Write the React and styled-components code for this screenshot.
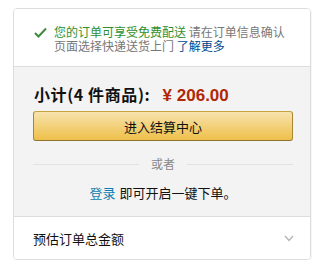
import React from 'react'
import styled, { createGlobalStyle } from 'styled-components'

const GlobalStyle = createGlobalStyle`
    body {
        margin: 0;
        background: #fff;
        font-family: "Noto Sans CJK SC", "Liberation Sans", sans-serif;
    }
`

const Page = styled.div`
    padding: 8px 9px 0 13px;
`

const Panel = styled.div`
    width: 298px;
    box-sizing: border-box;
    border: 1px solid #ddd;
    border-radius: 4px;
    overflow: hidden;
    box-shadow: 1px 1px 1px rgba(0, 0, 0, 0.04);
`

const Notice = styled.div`
    display: flex;
    align-items: flex-start;
    gap: 7px;
    padding: 16px 20px 13px 20px;
    background: #fff;
    border-bottom: 1px solid #ddd;
`

const NoticeText = styled.div`
    width: 236px;
    font-size: 12px;
    line-height: 14px;
    color: #777;
`

const Green = styled.span`
    color: #2f8f2f;
`

const LearnMore = styled.a`
    color: #004b91;
    text-decoration: none;
`

const Summary = styled.div`
    background: #f3f3f3;
    padding: 17px 17px 15px 19px;
    border-bottom: 1px solid #ddd;
`

const Subtotal = styled.div`
    font-size: 16px;
    line-height: 20px;
    font-weight: bold;
    color: #111;
    padding-left: 1px;
    letter-spacing: 0.6px;
`

const Price = styled.span`
    color: #b12704;
    margin-left: 8px;
    font-family: "Liberation Sans", sans-serif;
    font-size: 17px;
    letter-spacing: 0;
`

const CheckoutButton = styled.button`
    display: block;
    width: 100%;
    height: 30px;
    margin-top: 5px;
    border: 1px solid #a88734;
    border-color: #c4a23f #a88734 #8d7230;
    border-radius: 3px;
    background: linear-gradient(to bottom, #f8e3ad, #eebf4a);
    font-family: inherit;
    font-size: 13px;
    color: #111;
    cursor: pointer;
`

const Divider = styled.div`
    display: flex;
    align-items: center;
    gap: 12px;
    margin-top: 15px;
    font-size: 12px;
    line-height: 16px;
    color: #888;
    &::before, &::after {
        content: '';
        flex: 1;
        height: 1px;
        background: #e3e3e3;
    }
`

const SignIn = styled.div`
    margin-top: 13px;
    text-align: center;
    font-size: 13px;
    line-height: 16px;
    color: #111;
`

const SignInLink = styled.a`
    color: #0a7fb0;
    text-decoration: none;
    margin-right: 4px;
`

const EstimateRow = styled.div`
    display: flex;
    align-items: center;
    justify-content: space-between;
    height: 42px;
    padding: 0 16px 0 19px;
    background: #fff;
    font-size: 13px;
    color: #111;
`

const CheckIcon = () => (
    <svg width="13" height="11" viewBox="0 0 13 11" style={{ marginTop: 2, flexShrink: 0 }}>
        <polyline points="1,6 4.5,9.5 12,1.5" fill="none" stroke="#3c8c3c" strokeWidth="2" />
    </svg>
)

const Chevron = () => (
    <svg width="10" height="7" viewBox="0 0 10 7">
        <polyline points="1,1 5,5.5 9,1" fill="none" stroke="#b5b5b5" strokeWidth="1.4" />
    </svg>
)

export default function App() {
    return (
        <>
            <GlobalStyle />
            <Page>
                <Panel>
                    <Notice>
                        <CheckIcon />
                        <NoticeText>
                            <Green>您的订单可享受免费配送</Green> 请在订单信息确认页面选择快递送货上门 <LearnMore href="#">了解更多</LearnMore>
                        </NoticeText>
                    </Notice>
                    <Summary>
                        <Subtotal>
                            小计(4 件商品): <Price>¥ 206.00</Price>
                        </Subtotal>
                        <CheckoutButton>进入结算中心</CheckoutButton>
                        <Divider>或者</Divider>
                        <SignIn>
                            <SignInLink href="#">登录</SignInLink>即可开启一键下单。
                        </SignIn>
                    </Summary>
                    <EstimateRow>
                        <span>预估订单总金额</span>
                        <Chevron />
                    </EstimateRow>
                </Panel>
            </Page>
        </>
    )
}
